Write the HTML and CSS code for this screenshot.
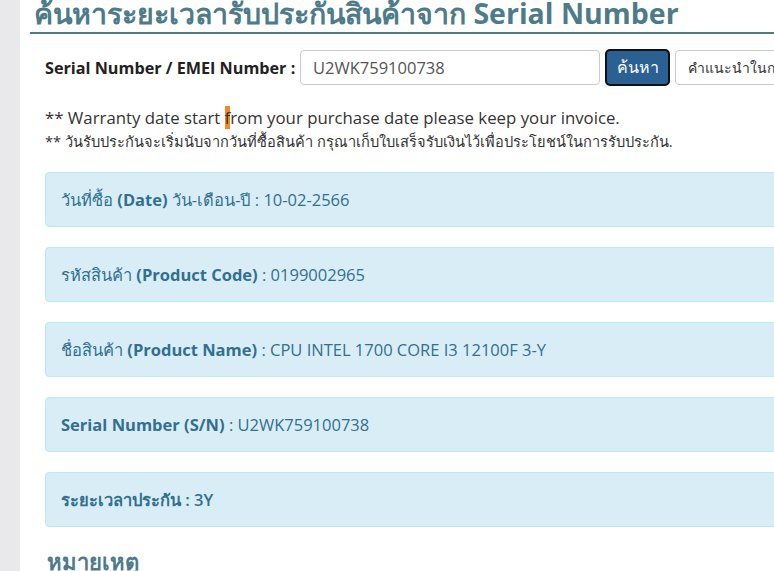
FILE: index.html
```html
<!DOCTYPE html>
<html lang="th">
<head>
<meta charset="utf-8">
<title>ค้นหาระยะเวลารับประกัน</title>
<link rel="stylesheet" href="styles.css">
</head>
<body>
<div class="page">
  <aside class="side"></aside>
  <main class="main">
    <h1 class="title">ค้นหาระยะเวลารับประกันสินค้าจาก Serial Number</h1>
    <div class="content">
      <form class="search">
        <label class="search-label">Serial Number / EMEI Number :</label>
        <input class="search-input" type="text" value="U2WK759100738">
        <button class="btn btn-primary" type="button">ค้นหา</button>
        <button class="btn btn-default" type="button">คำแนะนำในการค้นหา</button>
      </form>
      <p class="note note-en">** Warranty date start <span class="mark">f</span>rom your purchase date please keep your invoice.</p>
      <p class="note note-th">** วันรับประกันจะเริ่มนับจากวันที่ซื้อสินค้า กรุณาเก็บใบเสร็จรับเงินไว้เพื่อประโยชน์ในการรับประกัน.</p>
      <div class="results">
        <div class="alert"><span>วันที่ซื้อ <b>(Date)</b> วัน-เดือน-ปี : 10-02-2566</span></div>
        <div class="alert"><span>รหัสสินค้า <b>(Product Code)</b> : 0199002965</span></div>
        <div class="alert"><span>ชื่อสินค้า <b>(Product Name)</b> : CPU INTEL 1700 CORE I3 12100F 3-Y</span></div>
        <div class="alert"><span><b>Serial Number (S/N)</b> : U2WK759100738</span></div>
        <div class="alert"><span class="strong">ระยะเวลาประกัน : 3Y</span></div>
      </div>
      <h2 class="remark">หมายเหตุ</h2>
    </div>
  </main>
</div>
</body>
</html>
```
FILE: styles.css
```css
html, body {
  margin: 0;
  padding: 0;
  background: #fff;
  overflow: hidden;
}
body {
  font-family: "Open Sans", "Noto Sans", "DejaVu Sans", sans-serif;
  color: #333;
}
.page {
  display: flex;
  width: 1200px;
  min-height: 571px;
}
.side {
  width: 20px;
  flex: none;
  background: #e9e9eb;
}
.main {
  flex: 1;
  padding-left: 10px;
}
.title {
  margin: -6px 0 0 0;
  padding: 0 0 0 4px;
  font-size: 28.5px;
  line-height: 38px;
  font-weight: 700;
  color: #4e7b8a;
  border-bottom: 2px solid #4e7b8a;
  white-space: nowrap;
}
.content {
  padding-left: 15px;
}
.search {
  display: flex;
  align-items: center;
  margin-top: 16px;
  height: 35px;
}
.search-label {
  font-size: 16.2px;
  font-weight: 700;
  color: #222;
  width: 255px;
  white-space: nowrap;
}
.search-input {
  box-sizing: border-box;
  width: 300px;
  height: 35px;
  border: 1px solid #ccc;
  border-radius: 4px;
  padding: 0 12px;
  font-family: inherit;
  font-size: 16.5px;
  color: #555;
}
.btn {
  box-sizing: border-box;
  height: 35px;
  border-radius: 4px;
  font-family: inherit;
  padding: 0 12px;
  white-space: nowrap;
}
.btn-primary {
  margin-left: 6px;
  width: 63px;
  font-size: 16px;
  padding: 0;
  background: #2b6092;
  color: #fff;
  border: 1px solid #204d74;
  outline: 2px solid #111;
  outline-offset: -1px;
}
.btn-default {
  margin-left: 6px;
  font-size: 14px;
  background: #fff;
  color: #333;
  border: 1px solid #ccc;
}
.note {
  margin: 0;
  color: #333;
  white-space: nowrap;
}
.note-en {
  margin-top: 21px;
  font-size: 16.8px;
  line-height: 24px;
}
.note-th {
  font-size: 14.6px;
  line-height: 22px;
}
.mark {
  background: #f58a22;
}
.results {
  margin-top: 20px;
  display: flex;
  flex-direction: column;
  gap: 20px;
}
.alert {
  box-sizing: border-box;
  height: 55px;
  display: flex;
  align-items: center;
  padding: 0 15px;
  background: #d9edf7;
  border: 1px solid #bce8f1;
  border-radius: 4px;
  color: #31708f;
  font-size: 16.5px;
  white-space: nowrap;
}
.strong {
  font-weight: 600;
}
.remark {
  margin: 18px 0 0 2px;
  font-size: 22px;
  font-weight: 700;
  color: #4e7b8a;
}
```
